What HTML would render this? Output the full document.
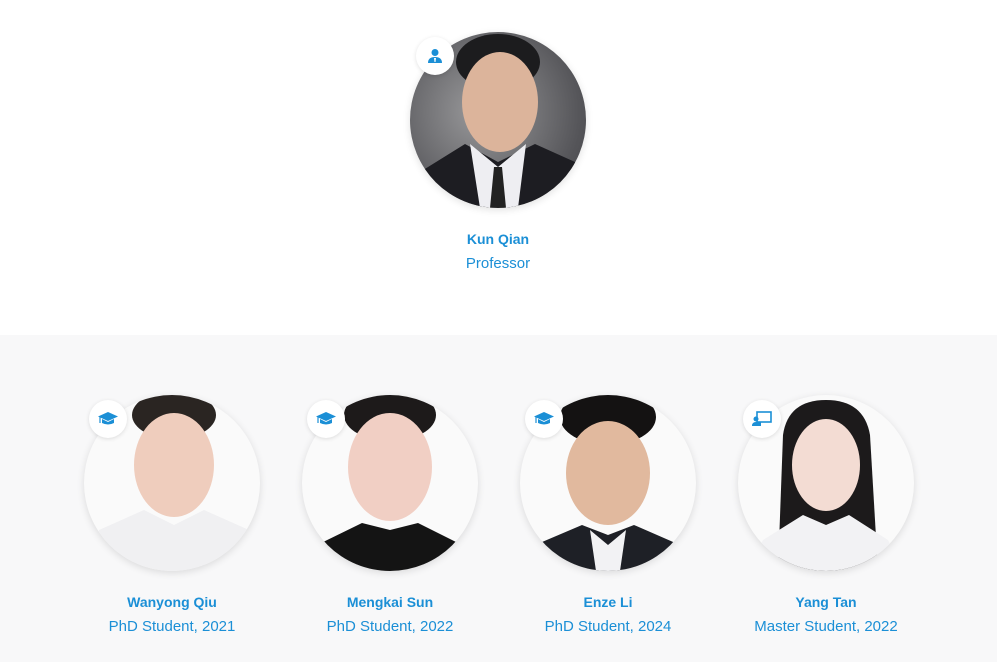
<!DOCTYPE html>
<html><head><meta charset="utf-8"><style>
*{margin:0;padding:0;box-sizing:border-box}
body{width:997px;height:662px;overflow:hidden;background:#fff;font-family:"Liberation Sans",sans-serif;position:relative}
.bot{position:absolute;left:0;top:335px;width:997px;height:327px;background:#f8f8f9}
.ph{position:absolute;width:176px;height:176px;border-radius:50%;overflow:hidden;box-shadow:0 2px 8px rgba(0,0,0,.12)}
.badge{position:absolute;width:38px;height:38px;border-radius:50%;background:#fff;box-shadow:0 1px 4px rgba(0,0,0,.12);display:flex;align-items:center;justify-content:center}
.nm{position:absolute;width:240px;text-align:center;color:#1b8fd6;font-weight:bold;font-size:14px}
.rl{position:absolute;width:240px;text-align:center;color:#1b8fd6;font-size:15px}
svg{display:block}
</style></head><body>
<div class="bot"></div>

<div class="ph" style="left:410px;top:32px;background:radial-gradient(circle at 40% 45%,#9a9a9c,#555559 70%,#3f3f43)">
<svg width="176" height="176"><ellipse cx="88" cy="30" rx="42" ry="28" fill="#1c1c1e"/><ellipse cx="90" cy="70" rx="38" ry="50" fill="#dcb49b"/><path d="M0 176 L10 140 L55 112 L88 130 L125 112 L165 130 L176 176Z" fill="#1d1d22"/><path d="M60 112 L88 135 L116 112 L108 176 L70 176Z" fill="#eeeef2"/><path d="M84 135 L92 135 L96 176 L80 176Z" fill="#222"/></svg></div>
<div class="badge" style="left:416px;top:37px"><svg width="16" height="16" viewBox="0 0 16 16"><circle cx="8" cy="4.5" r="3.5" fill="#1b8fd6"/><path d="M1 15 Q1 9 8 9 Q15 9 15 15Z" fill="#1b8fd6"/><path d="M7 10h2l-.5 4h-1z" fill="#fff"/></svg></div>
<div class="nm" style="left:378px;top:231px">Kun Qian</div>
<div class="rl" style="left:378px;top:255px">Professor</div>

<div class="ph" style="left:84px;top:395px;background:#fafafa"><svg width="176" height="176"><ellipse cx="90" cy="20" rx="42" ry="24" fill="#2a2522"/><ellipse cx="90" cy="70" rx="40" ry="52" fill="#efcdbd"/><path d="M0 176 L15 135 L60 115 L90 130 L120 115 L165 135 L176 176Z" fill="#f0f0f2"/></svg></div>
<div class="ph" style="left:302px;top:395px;background:#fafafa"><svg width="176" height="176"><ellipse cx="88" cy="20" rx="46" ry="26" fill="#1d1a1a"/><ellipse cx="88" cy="72" rx="42" ry="54" fill="#f1cfc4"/><path d="M0 176 L15 150 L60 128 L88 135 L116 128 L160 150 L176 176Z" fill="#141414"/></svg></div>
<div class="ph" style="left:520px;top:395px;background:#fafafa"><svg width="176" height="176"><ellipse cx="88" cy="22" rx="48" ry="28" fill="#141212"/><ellipse cx="88" cy="78" rx="42" ry="52" fill="#e1b99e"/><path d="M0 176 L15 150 L62 130 L88 140 L114 130 L160 150 L176 176Z" fill="#1e2026"/><path d="M70 135 L88 150 L106 135 L100 176 L76 176Z" fill="#f2f2f4"/></svg></div>
<div class="ph" style="left:738px;top:395px;background:#fafafa"><svg width="176" height="176"><path d="M40 176 L45 40 Q50 5 88 5 Q126 5 132 40 L140 176Z" fill="#1c1a1b"/><ellipse cx="88" cy="70" rx="34" ry="46" fill="#f3dcd3"/><path d="M10 176 L25 145 L65 120 L88 130 L111 120 L150 145 L166 176Z" fill="#f2f2f4"/></svg></div>

<div class="badge" style="left:89px;top:400px"><svg width="20" height="16" viewBox="0 0 20 16"><path d="M10 1 L20 5.5 L10 10 L0 5.5Z" fill="#1b8fd6"/><path d="M4 8v4q6 3 12 0v-4l-6 3z" fill="#1b8fd6"/><path d="M2 6v6" stroke="#1b8fd6" stroke-width="1.2"/></svg></div>
<div class="badge" style="left:307px;top:400px"><svg width="20" height="16" viewBox="0 0 20 16"><path d="M10 1 L20 5.5 L10 10 L0 5.5Z" fill="#1b8fd6"/><path d="M4 8v4q6 3 12 0v-4l-6 3z" fill="#1b8fd6"/><path d="M2 6v6" stroke="#1b8fd6" stroke-width="1.2"/></svg></div>
<div class="badge" style="left:525px;top:400px"><svg width="20" height="16" viewBox="0 0 20 16"><path d="M10 1 L20 5.5 L10 10 L0 5.5Z" fill="#1b8fd6"/><path d="M4 8v4q6 3 12 0v-4l-6 3z" fill="#1b8fd6"/><path d="M2 6v6" stroke="#1b8fd6" stroke-width="1.2"/></svg></div>
<div class="badge" style="left:743px;top:400px"><svg width="20" height="16" viewBox="0 0 20 16"><rect x="5" y="1" width="14" height="10" fill="none" stroke="#1b8fd6" stroke-width="1.6"/><circle cx="4" cy="8" r="2.5" fill="#1b8fd6"/><path d="M0 15q0-4 4-4h5v4z" fill="#1b8fd6"/></svg></div>

<div class="nm" style="left:52px;top:594px">Wanyong Qiu</div><div class="rl" style="left:52px;top:618px">PhD Student, 2021</div>
<div class="nm" style="left:270px;top:594px">Mengkai Sun</div><div class="rl" style="left:270px;top:618px">PhD Student, 2022</div>
<div class="nm" style="left:488px;top:594px">Enze Li</div><div class="rl" style="left:488px;top:618px">PhD Student, 2024</div>
<div class="nm" style="left:706px;top:594px">Yang Tan</div><div class="rl" style="left:706px;top:618px">Master Student, 2022</div>
</body></html>
